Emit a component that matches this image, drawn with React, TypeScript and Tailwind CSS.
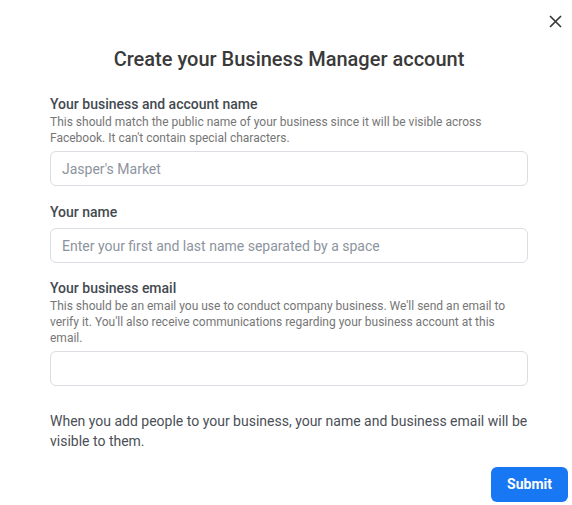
import React from 'react';

const Field: React.FC<{ label: string; help?: string; placeholder?: string; gap: string }> = ({ label, help, placeholder, gap }) => (
  <div>
    <div className="text-[14px] leading-[20px] font-medium text-[#444950]">{label}</div>
    {help && <p className="text-[12px] leading-[16px] text-[#767676]">{help}</p>}
    <input
      className={`${gap} block w-full h-[35px] rounded-[6px] border border-[#dadde1] px-[11px] text-[14px] text-[#1c1e21] placeholder:text-[#8d949e] outline-none`}
      placeholder={placeholder}
    />
  </div>
);

export default function App() {
  return (
    <div className="relative w-[572px] h-[505px] bg-white overflow-hidden" style={{ fontFamily: 'Roboto, "Liberation Sans", sans-serif' }}>
      <button className="absolute top-[15px] right-[10px] w-[13px] h-[13px] text-[#333]" aria-label="Close">
        <svg viewBox="0 0 13 13" className="w-[13px] h-[13px]" fill="none" stroke="currentColor" strokeWidth={1.6}>
          <path d="M1 1l11 11M12 1L1 12" />
        </svg>
      </button>

      <div className="pl-[50px] pr-[44px] pt-[47px]">
        <h1 className="text-[20px] leading-[24px] font-medium text-[#3a3a3a] text-center">Create your Business Manager account</h1>

        <div className="mt-[23px]">
          <Field
            label="Your business and account name"
            help="This should match the public name of your business since it will be visible across Facebook. It can't contain special characters."
            placeholder="Jasper's Market"
            gap="mt-[5px]"
          />
        </div>

        <div className="mt-[16px]">
          <Field label="Your name" placeholder="Enter your first and last name separated by a space" gap="mt-[6px]" />
        </div>

        <div className="mt-[15px]">
          <Field
            label="Your business email"
            help="This should be an email you use to conduct company business. We'll send an email to verify it. You'll also receive communications regarding your business account at this email."
            gap="mt-[5px]"
          />
        </div>

        <p className="mt-[25px] text-[14px] leading-[20px] text-[#4b4f56]">
          When you add people to your business, your name and business email will be visible to them.
        </p>
      </div>

      <div className="flex justify-end pr-[4px] mt-[16px]">
        <button className="w-[77px] h-[35px] rounded-[6px] bg-[#1877f2] text-white text-[14px] font-bold">Submit</button>
      </div>
    </div>
  );
}
